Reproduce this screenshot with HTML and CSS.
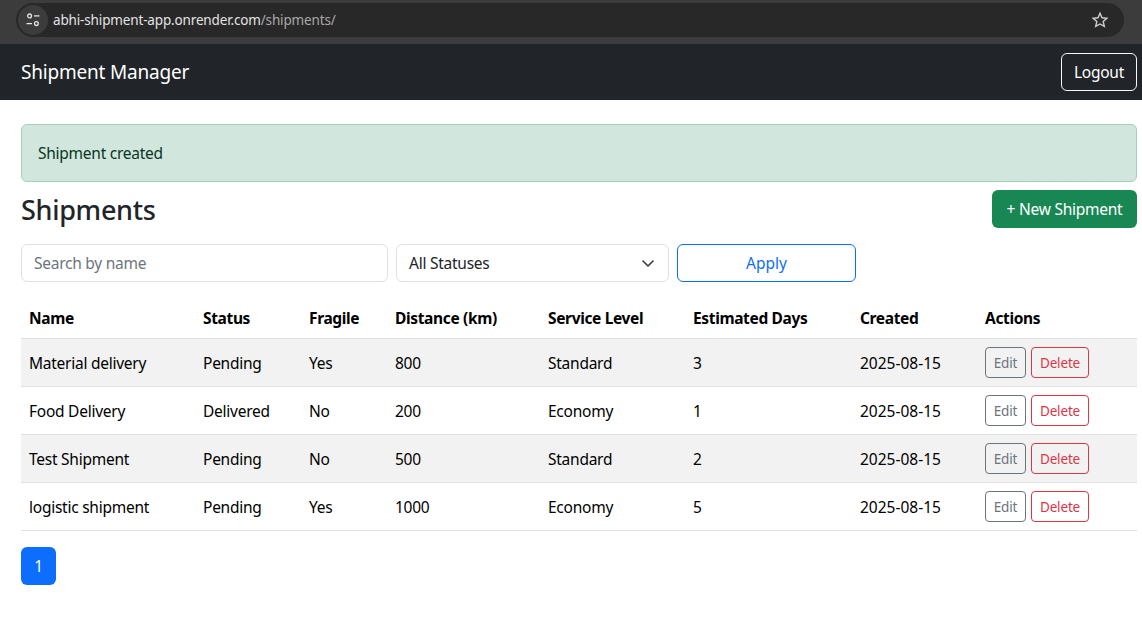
FILE: index.html
```html
<!DOCTYPE html>
<html lang="en">
  <head>
    <meta charset="UTF-8" />
    <title>Shipments</title>
    <link rel="stylesheet" href="styles.css">
  </head>
  <body>
    <div class="browser-bar">
      <div class="url-pill">
        <span class="site-icon">
          <svg width="16" height="16" viewBox="0 0 16 16" fill="none" stroke="#e3e3e3" stroke-width="1.3">
            <circle cx="4.6" cy="3.9" r="1.9"/>
            <path d="M9 3.9h5.5"/>
            <circle cx="11.4" cy="11.6" r="1.9"/>
            <path d="M1.5 11.6h5.5"/>
          </svg>
        </span>
        <span class="url-host">abhi-shipment-app.onrender.com</span><span class="url-path">/shipments/</span>
        <svg class="star" width="18" height="18" viewBox="0 0 18 18" fill="none" stroke="#d0d0d0" stroke-width="1.4">
          <path d="M9 2.3l2 4.5 4.9.5-3.7 3.3 1.1 4.8L9 13l-4.3 2.4 1.1-4.8-3.7-3.3 4.9-.5z"/>
        </svg>
      </div>
    </div>

    <nav class="navbar">
      <a class="brand">Shipment Manager</a>
      <button class="btn-logout">Logout</button>
    </nav>

    <div class="main">
      <div class="alert">Shipment created</div>

      <div class="title-row">
        <h2>Shipments</h2>
        <button class="btn-new">+ New Shipment</button>
      </div>

      <form class="filters">
        <input class="search" type="text" placeholder="Search by name" />
        <div class="select">
          <span>All Statuses</span>
          <svg width="16" height="16" viewBox="0 0 16 16" fill="none" stroke="#343a40" stroke-width="1.6" stroke-linecap="round" stroke-linejoin="round">
            <path d="M3 6l5 5 5-5"/>
          </svg>
        </div>
        <button class="btn-apply" type="button">Apply</button>
      </form>

      <table>
        <colgroup>
          <col class="c-name"><col class="c-status"><col class="c-fragile"><col class="c-distance">
          <col class="c-service"><col class="c-days"><col class="c-created"><col class="c-actions">
        </colgroup>
        <thead>
          <tr>
            <th>Name</th><th>Status</th><th>Fragile</th><th>Distance (km)</th>
            <th>Service Level</th><th>Estimated Days</th><th>Created</th><th>Actions</th>
          </tr>
        </thead>
        <tbody>
          <tr>
            <td>Material delivery</td><td>Pending</td><td>Yes</td><td>800</td>
            <td>Standard</td><td>3</td><td class="date">2025-08-15</td>
            <td class="actions"><a class="btn-edit">Edit</a><a class="btn-delete">Delete</a></td>
          </tr>
          <tr>
            <td>Food Delivery</td><td>Delivered</td><td>No</td><td>200</td>
            <td>Economy</td><td>1</td><td class="date">2025-08-15</td>
            <td class="actions"><a class="btn-edit">Edit</a><a class="btn-delete">Delete</a></td>
          </tr>
          <tr>
            <td>Test Shipment</td><td>Pending</td><td>No</td><td>500</td>
            <td>Standard</td><td>2</td><td class="date">2025-08-15</td>
            <td class="actions"><a class="btn-edit">Edit</a><a class="btn-delete">Delete</a></td>
          </tr>
          <tr>
            <td>logistic shipment</td><td>Pending</td><td>Yes</td><td>1000</td>
            <td>Economy</td><td>5</td><td class="date">2025-08-15</td>
            <td class="actions"><a class="btn-edit">Edit</a><a class="btn-delete">Delete</a></td>
          </tr>
        </tbody>
      </table>

      <div class="pagination"><a class="page-on">1</a></div>
    </div>
  </body>
</html>
```

FILE: styles.css
```css
* {
  padding: 0px;
  margin: 0px;
  box-sizing: border-box;
}
body {
  font-family: "Noto Sans", "Open Sans", sans-serif;
  font-size: 15.5px;
  letter-spacing: -0.25px;
  color: #212529;
  background: #fff;
  overflow: hidden;
}
button,
input {
  font-family: inherit;
  letter-spacing: inherit;
}

/* browser chrome */
.browser-bar {
  height: 44px;
  background: #3c3c3c;
  padding: 3px 18px 0px 16px;
}
.url-pill {
  height: 34px;
  background: #282828;
  border-radius: 17px;
  display: flex;
  align-items: center;
  font-size: 13.5px;
  letter-spacing: -0.15px;
  padding-right: 15px;
}
.site-icon {
  width: 30px;
  height: 30px;
  margin: 0px 5px 0px 2px;
  border-radius: 50%;
  background: #3c3c3c;
  display: flex;
  align-items: center;
  justify-content: center;
}
.url-host {
  color: #e3e3e3;
}
.url-path {
  color: #a8a8a8;
}
.star {
  margin-left: auto;
}

/* navbar */
.navbar {
  height: 56px;
  background: #212529;
  padding: 0px 5px 0px 21px;
  display: flex;
  align-items: center;
  justify-content: space-between;
}
.brand {
  color: #fff;
  font-size: 19px;
  letter-spacing: -0.2px;
}
.btn-logout {
  width: 76px;
  height: 38px;
  color: #fff;
  background: transparent;
  border: 1px solid #f8f9fa;
  border-radius: 6px;
  font-size: 15.5px;
}

/* content */
.main {
  padding: 24px 5px 0px 21px;
}
.alert {
  height: 58px;
  padding: 0px 16px;
  display: flex;
  align-items: center;
  background: #d1e7dd;
  border: 1px solid #a3cfbb;
  border-radius: 6px;
  color: #0a3622;
}
.title-row {
  display: flex;
  justify-content: space-between;
  align-items: center;
  margin-top: 8px;
  height: 38px;
}
h2 {
  font-size: 27px;
  font-weight: 500;
  line-height: 40px;
  letter-spacing: -0.3px;
  margin-top: 1px;
}
.btn-new {
  width: 145px;
  height: 38px;
  color: #fff;
  background: #198754;
  border: 0px;
  border-radius: 6px;
  font-size: 15.5px;
}
.filters {
  display: flex;
  gap: 8px;
  margin-top: 16px;
}
.search,
.select {
  height: 38px;
  border: 1px solid #dee2e6;
  border-radius: 6px;
  padding: 0px 12px;
  font-size: 15.5px;
  color: #212529;
  background: #fff;
}
.search {
  width: 367px;
}
.search::placeholder {
  color: #6c757d;
  opacity: 1;
}
.select {
  width: 273px;
  display: flex;
  align-items: center;
  justify-content: space-between;
}
.btn-apply {
  width: 179px;
  height: 38px;
  color: #0d6efd;
  background: #fff;
  border: 1px solid #0d6efd;
  border-radius: 6px;
  font-size: 15.5px;
  letter-spacing: 0px;
}

/* table */
table {
  width: 1116px;
  margin-top: 17px;
  border-collapse: collapse;
  table-layout: fixed;
  color: #000;
}
.c-name { width: 174px; }
.c-status { width: 106px; }
.c-fragile { width: 86px; }
.c-distance { width: 153px; }
.c-service { width: 145px; }
.c-days { width: 167px; }
.c-created { width: 125px; }
.c-actions { width: 160px; }
th,
td {
  padding: 0px 8px;
  text-align: left;
  border-bottom: 1px solid #dee2e6;
}
th {
  height: 39px;
  font-weight: 700;
  letter-spacing: -0.35px;
}
td {
  height: 48px;
  padding-top: 2px;
}
td.actions {
  padding-top: 0px;
}
td.date {
  letter-spacing: 0px;
}
tbody tr:nth-child(odd) {
  background: #f2f2f2;
}
.btn-edit,
.btn-delete {
  display: inline-block;
  height: 31px;
  line-height: 30px;
  font-size: 13.5px;
  letter-spacing: -0.15px;
  text-align: center;
  border-radius: 4px;
  vertical-align: middle;
}
.btn-edit {
  width: 41px;
  color: #6c757d;
  border: 1px solid #6c757d;
  margin-right: 5px;
}
.btn-delete {
  width: 58px;
  color: #dc3545;
  border: 1px solid #dc3545;
}

/* pagination */
.pagination {
  margin-top: 16px;
}
.page-on {
  display: block;
  width: 35px;
  height: 38px;
  line-height: 38px;
  text-align: center;
  color: #fff;
  background: #0d6efd;
  border-radius: 6px;
}
```
